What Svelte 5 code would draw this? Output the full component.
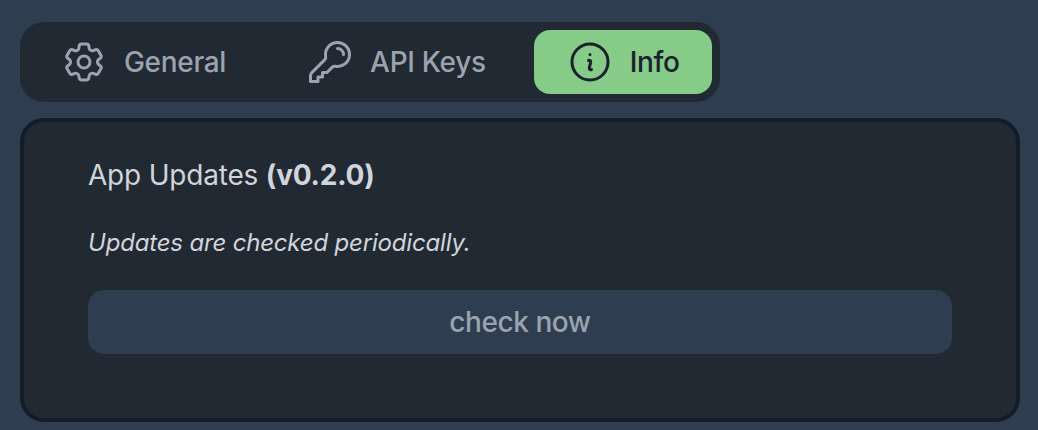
<script>
    let tabs = [
        { name: 'General', icon: 'cog', active: false },
        { name: 'API Keys', icon: 'key', active: false },
        { name: 'Info', icon: 'info', active: true }
    ]
</script>

<div class="page">
    <nav class="tabs">
        {#each tabs as tab}
            <button class="tab" class:active={tab.active}>
                <svg viewBox="0 0 24 24" fill="none" stroke="currentColor" stroke-width="1.5" stroke-linecap="round" stroke-linejoin="round">
                    {#if tab.icon === 'cog'}
                        <path d="M9.594 3.94c.09-.542.56-.94 1.11-.94h2.593c.55 0 1.02.398 1.11.94l.213 1.281c.063.374.313.686.645.87.074.04.147.083.22.127.325.196.72.257 1.075.124l1.217-.456a1.125 1.125 0 0 1 1.37.49l1.296 2.247a1.125 1.125 0 0 1-.26 1.431l-1.003.827c-.293.241-.438.613-.43.992a7.723 7.723 0 0 1 0 .255c-.008.378.137.75.43.991l1.004.827c.424.35.534.955.26 1.43l-1.298 2.247a1.125 1.125 0 0 1-1.369.491l-1.217-.456c-.355-.133-.75-.072-1.076.124a6.47 6.47 0 0 1-.22.128c-.331.183-.581.495-.644.869l-.213 1.281c-.09.543-.56.94-1.11.94h-2.594c-.55 0-1.019-.398-1.11-.94l-.213-1.281c-.062-.374-.312-.686-.644-.87a6.52 6.52 0 0 1-.22-.127c-.325-.196-.72-.257-1.076-.124l-1.217.456a1.125 1.125 0 0 1-1.369-.49l-1.297-2.247a1.125 1.125 0 0 1 .26-1.431l1.004-.827c.292-.24.437-.613.43-.991a6.932 6.932 0 0 1 0-.255c.007-.38-.138-.751-.43-.992l-1.004-.827a1.125 1.125 0 0 1-.26-1.43l1.297-2.247a1.125 1.125 0 0 1 1.37-.491l1.216.456c.356.133.751.072 1.076-.124.072-.044.146-.086.22-.128.332-.183.582-.495.644-.869l.214-1.28Z" />
                        <path d="M15 12a3 3 0 1 1-6 0 3 3 0 0 1 6 0Z" />
                    {:else if tab.icon === 'key'}
                        <path d="M15.75 5.25a3 3 0 0 1 3 3m3 0a6 6 0 0 1-7.029 5.912c-.563-.097-1.159.026-1.563.43L10.5 17.25H8.25v2.25H6v2.25H2.25v-2.818c0-.597.237-1.17.659-1.591l6.499-6.499c.404-.404.527-1 .43-1.563A6 6 0 1 1 21.75 8.25Z" />
                    {:else}
                        <path d="m11.25 11.25.041-.02a.75.75 0 0 1 1.063.852l-.708 2.836a.75.75 0 0 0 1.063.853l.041-.021M21 12a9 9 0 1 1-18 0 9 9 0 0 1 18 0Zm-9-3.75h.008v.008H12V8.25Z" />
                    {/if}
                </svg>
                <span>{tab.name}</span>
            </button>
        {/each}
    </nav>

    <section class="panel">
        <h2>App Updates <b>(v0.2.0)</b></h2>
        <p>Updates are checked periodically.</p>
        <button class="check">check now</button>
    </section>
</div>

<style>
    :global(body) {
        background: #2e3d50;
    }

    .page {
        display: flex;
        flex-direction: column;
        align-items: flex-start;
        gap: 16px;
        padding: 22px 18px 8px 20px;
        font-family: Inter, "Liberation Sans", sans-serif;
    }

    .tabs {
        display: flex;
        gap: 16px;
        padding: 8px;
        background: #212933;
        border-radius: 24px;
    }

    .tab {
        display: flex;
        align-items: center;
        gap: 16px;
        height: 64px;
        padding: 0 32px;
        border: 0;
        border-radius: 16px;
        background: transparent;
        color: #9ca3af;
        font: 500 28px/40px Inter, sans-serif;
        letter-spacing: -0.32px;
    }

    .tab svg {
        width: 48px;
        height: 48px;
    }

    .tab.active {
        background: #86cb88;
        color: #1a2230;
    }

    .panel {
        box-sizing: border-box;
        width: 1000px;
        height: 304px;
        padding: 33px 64px;
        background: #212933;
        border: 4px solid #141c28;
        border-radius: 24px;
    }

    h2 {
        margin: 0;
        color: #d1d5db;
        font-size: 28px;
        font-weight: 400;
        line-height: 40px;
        letter-spacing: -0.2px;
    }

    h2 b {
        font-weight: 700;
    }

    p {
        margin: 28px 0 0;
        color: #d1d5db;
        font-size: 24px;
        font-style: italic;
        line-height: 40px;
        letter-spacing: -0.18px;
    }

    .check {
        display: block;
        width: 100%;
        height: 64px;
        margin-top: 27px;
        border: 0;
        border-radius: 16px;
        background: #2e3d50;
        color: #9ca3af;
        font: 500 28px/40px Inter, sans-serif;
        letter-spacing: -0.44px;
    }
</style>
